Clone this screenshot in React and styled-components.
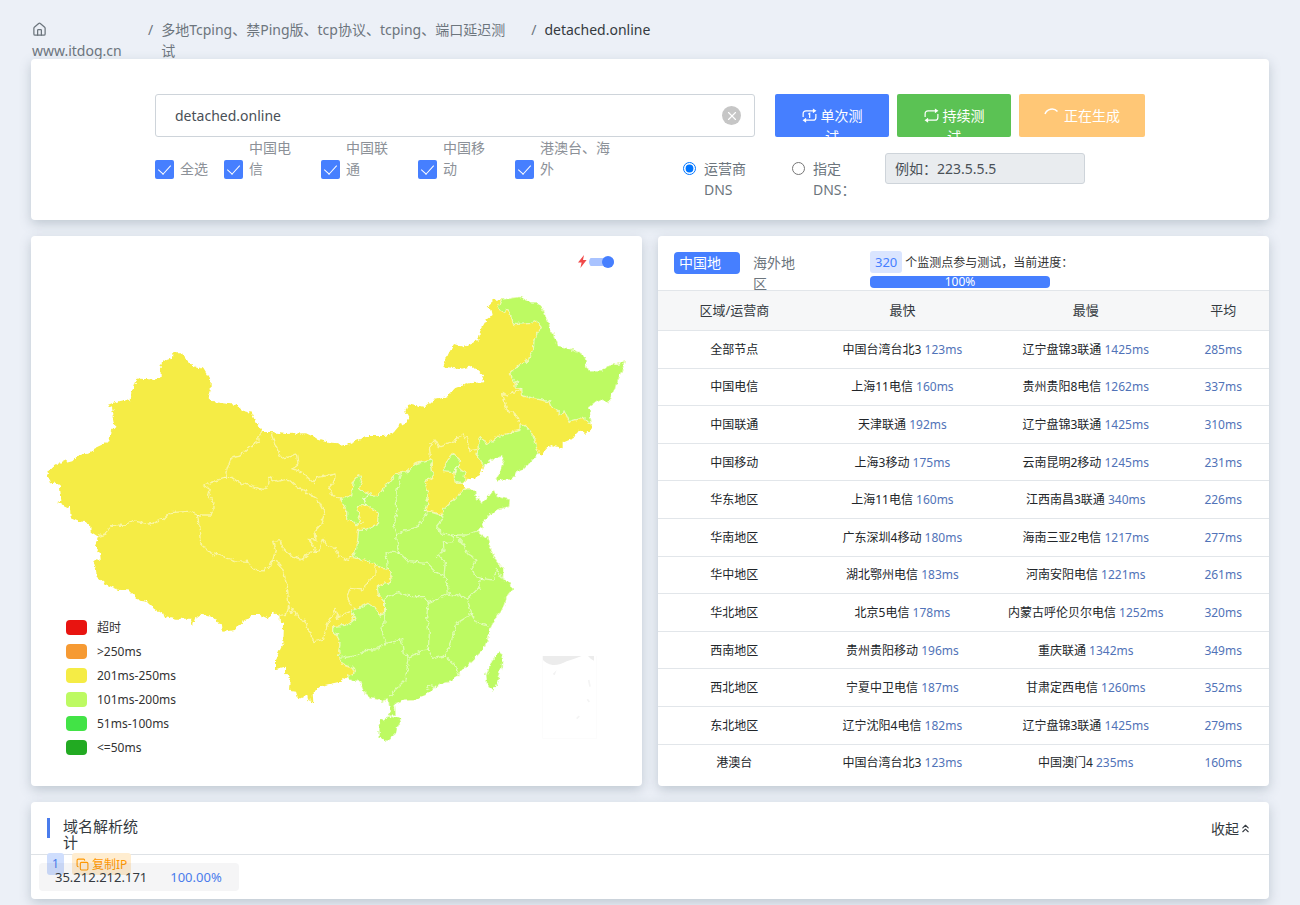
import React from 'react';
import styled, { createGlobalStyle } from 'styled-components';
import { ChevronsUp, Copy, House, X } from 'lucide-react';

const GlobalStyle = createGlobalStyle`
  * {
    box-sizing: border-box;
  }

  body {
    margin: 0;
    background: #ecf0f7;
    color: #212529;
    font-family: "Noto Sans", "Noto Sans CJK SC", sans-serif;
    font-size: 14px;
    line-height: 21px;
  }

  button, input {
    font: inherit;
    margin: 0;
  }
`;

const Page = styled.div`
  padding: 0 31px 6px;
`;

const Card = styled.section`
  background: #fff;
  border-radius: 4px;
  box-shadow: 0 4px 12px rgba(90, 110, 125, 0.3);
`;

/* ---------- breadcrumb ---------- */

const Breadcrumb = styled.ol`
  display: flex;
  list-style: none;
  margin: 0;
  padding: 19px 0 0 1px;
  height: 59px;
  overflow: hidden;
`;

const Crumb = styled.li`
  flex: 0 0 ${(p) => p.$width || 'auto'};
  color: ${(p) => (p.$active ? '#343a40' : '#6c757d')};

  a {
    display: block;
    max-width: 352px;
    color: inherit;
    text-decoration: none;
  }

  svg {
    display: block;
    margin: 3px 0;
  }
`;

const Slash = styled.li`
  padding: 0 8px;
  color: #6c757d;
`;

/* ---------- query form ---------- */

const FormCard = styled(Card)`
  padding: 35px 20px 20px;
`;

const Form = styled.form`
  max-width: 990px;
  margin: 0 auto;
`;

const TopRow = styled.div`
  display: flex;
  gap: 8px;
`;

const HostField = styled.div`
  flex: 0 1 600px;
  display: flex;
  align-items: center;
  height: 43px;
  margin-right: 12px;
  padding-right: 13px;
  border: 1px solid #ced4da;
  border-radius: 3px;

  input {
    flex: 1;
    min-width: 0;
    padding: 0 19px;
    border: 0;
    outline: 0;
    background: none;
    color: #495057;
  }
`;

const ClearButton = styled.button`
  display: flex;
  align-items: center;
  justify-content: center;
  width: 19px;
  height: 19px;
  padding: 0;
  border: 0;
  border-radius: 50%;
  background: #c6c6c6;
  color: #fff;
`;

const ActionButton = styled.button`
  flex: 0 0 ${(p) => p.$width || '114px'};
  height: 43px;
  padding: 11px 24px;
  border: 0;
  border-radius: 2px;
  background: ${(p) => p.$color};
  color: #fff;
  overflow: hidden;

  span {
    display: block;
    height: 21px;
  }

  svg {
    margin-right: 4px;
    vertical-align: -2px;
  }
`;

const OptionRow = styled.div`
  display: flex;
`;

const CheckGroup = styled.div`
  display: flex;
  align-items: flex-end;
  flex: 0 0 528px;
  height: 42px;
`;

const CheckLabel = styled.label`
  display: flex;
  align-items: flex-end;
  gap: 6px;
  flex: 0 0 ${(p) => p.$width};
  color: #8c9198;

  span {
    max-width: ${(p) => p.$textWidth};
  }
`;

const Checkbox = styled.input`
  appearance: none;
  flex: 0 0 19px;
  height: 19px;
  border-radius: 2px;
  background: #467fff;

  &:checked::after {
    content: '';
    display: block;
    width: 6px;
    height: 11px;
    margin: 2px 0 0 6px;
    border: solid #fff;
    border-width: 0 1px 1px 0;
    transform: rotate(42deg);
  }
`;

const DnsGroup = styled.div`
  display: flex;
  align-items: flex-start;
  padding-top: 16px;
`;

const RadioLabel = styled.label`
  display: flex;
  align-items: flex-start;
  gap: 8px;
  width: ${(p) => p.$width};
  padding-top: 5px;
  color: #6c757d;

  input {
    flex: none;
    margin-top: 4px;
  }

  span {
    width: 48px;
  }
`;

const DnsInput = styled.input`
  width: 200px;
  height: 31px;
  padding: 0 9px;
  border: 1px solid #ced4da;
  border-radius: 3px;
  background: #e9ecef;

  &::placeholder {
    color: #495057;
    opacity: 1;
  }
`;

/* ---------- map ---------- */

const Columns = styled.div`
  display: grid;
  grid-template-columns: 1fr 1fr;
  gap: 16px;
  margin: 16px 0;
`;

// the drawing, the legend and the switch share one grid cell
const MapCard = styled(Card)`
  display: grid;

  > * {
    grid-area: 1 / 1;
  }
`;

const MapSvg = styled.svg`
  display: block;
  width: 100%;
`;

const Legend = styled.ul`
  align-self: end;
  justify-self: start;
  list-style: none;
  margin: 0;
  padding: 0 0 26px 35px;
  font-size: 12px;
  color: #333;
  z-index: 1;

  li {
    display: flex;
    align-items: center;
    gap: 10px;
    height: 24px;
    line-height: 18px;
    padding-bottom: 1px;
  }
`;

const Swatch = styled.i`
  width: 21px;
  height: 15px;
  border-radius: 4px;
  background: ${(p) => p.$color};
`;

const SwitchLabel = styled.label`
  align-self: start;
  justify-self: end;
  display: flex;
  align-items: center;
  gap: 2px;
  padding: 19px 28px 0 0;
  z-index: 1;
`;

const Switch = styled.input`
  appearance: none;
  width: 25px;
  height: 12px;
  border-radius: 6px;
  background: linear-gradient(#a9c3ff, #a9c3ff) center / 100% 8px no-repeat;

  &::after {
    content: '';
    display: block;
    width: 12px;
    height: 12px;
    margin-left: auto;
    border-radius: 50%;
    background: #467fff;
  }
`;

/* ---------- region table ---------- */

const TableHead = styled.div`
  display: flex;
  height: 54px;
  padding: 15px 16px 0;
  overflow: hidden;
`;

const Tabs = styled.div`
  display: flex;
  align-items: flex-start;
  gap: 8px;
  flex: 0 0 196px;
`;

const Tab = styled.button`
  width: 66px;
  height: 22px;
  margin-top: 1px;
  padding: 0 18px 1px 5px;
  border: 0;
  border-radius: 4px;
  text-align: left;
  background: ${(p) => (p.$active ? '#467fff' : 'none')};
  color: ${(p) => (p.$active ? '#fff' : '#6c757d')};
  overflow: ${(p) => (p.$active ? 'hidden' : 'visible')};

  span {
    display: block;
    height: 21px;
  }
`;

const ProgressInfo = styled.div`
  font-size: 12px;
  color: #333;
  white-space: nowrap;
`;

const CountLine = styled.div`
  display: flex;
  align-items: center;
  gap: 3px;
`;

const Count = styled.span`
  padding: 0 5px;
  border-radius: 3px;
  background: #dae5ff;
  color: #467fff;
  font-size: 13px;
  line-height: 22px;
`;

const Bar = styled.div`
  width: 180px;
  height: 12px;
  margin-top: 3px;
  border-radius: 4px;
  background: #467fff;
  color: #fff;
  line-height: 12px;
  text-align: center;
`;

const RegionTable = styled.table`
  width: 100%;
  height: 491px;
  table-layout: fixed;
  border-collapse: collapse;
  text-align: center;
  font-size: 12px;

  th {
    height: 40px;
    padding: 0;
    background: #f6f7f8;
    border: solid #e2e6ea;
    border-width: 1px 0;
    font-size: 13px;
    font-weight: 400;
    color: #343a40;
  }

  td {
    padding: 0;
    border-bottom: 1px solid #e2e6ea;
    white-space: nowrap;
  }

  tr:last-child td {
    border-bottom: 0;
  }

  th:nth-child(1) { width: 25%; }
  th:nth-child(2) { width: 30%; }
  th:nth-child(3) { width: 30%; }
  th:nth-child(4) { width: 15%; }
`;

const Ms = styled.span`
  color: #5173b8;
`;

/* ---------- resolve statistics ---------- */

const StatHeader = styled.header`
  display: flex;
  align-items: flex-start;
  justify-content: space-between;
  height: 53px;
  padding: 16px 17px 0 16px;
  border-bottom: 1px solid #dee2e6;
`;

const StatTitle = styled.h2`
  width: 92px;
  height: 20px;
  margin: 0;
  padding-left: 13px;
  border-left: 3px solid #4a7cec;
  font-size: 15px;
  font-weight: 400;
  line-height: 16px;
  color: #343a40;
`;

const FoldButton = styled.button`
  display: flex;
  align-items: center;
  padding: 0;
  border: 0;
  background: none;
  color: #343a40;
`;

const StatBody = styled.div`
  margin-top: -2px;
  padding: 0 8px 8px;
`;

const Tags = styled.div`
  display: flex;
  gap: 8px;
  padding-left: 8px;
  margin-bottom: -12px;
`;

const IndexTag = styled.span`
  width: 17px;
  border-radius: 3px;
  background: #cfdefd;
  color: #4a7cec;
  font-size: 12px;
  line-height: 22px;
  text-align: center;
`;

const CopyButton = styled.button`
  display: flex;
  align-items: center;
  gap: 3px;
  height: 22px;
  padding: 0 4px;
  border: 0;
  border-radius: 3px;
  background: #ffedd0;
  color: #ff9800;
  font-size: 12px;
`;

const IpRow = styled.div`
  position: relative;
  display: flex;
  gap: 23px;
  width: 200px;
  padding: 0 16px;
  border-radius: 4px;
  background: rgba(60, 60, 70, 0.05);
  font-size: 13px;
  line-height: 28px;
  color: #343a40;

  b {
    color: #4a7cec;
    font-weight: 400;
  }
`;

const yellow = '#f5ec45';
const lime = '#bdfa62';

const legend = [
  ['#e81410', '超时'],
  ['#f69a33', '>250ms'],
  [yellow, '201ms-250ms'],
  [lime, '101ms-200ms'],
  ['#42e346', '51ms-100ms'],
  ['#22aa22', '<=50ms'],
];

const rows = [
  ['全部节点', '中国台湾台北3', 123, '辽宁盘锦3联通', 1425, 285],
  ['中国电信', '上海11电信', 160, '贵州贵阳8电信', 1262, 337],
  ['中国联通', '天津联通', 192, '辽宁盘锦3联通', 1425, 310],
  ['中国移动', '上海3移动', 175, '云南昆明2移动', 1245, 231],
  ['华东地区', '上海11电信', 160, '江西南昌3联通', 340, 226],
  ['华南地区', '广东深圳4移动', 180, '海南三亚2电信', 1217, 277],
  ['华中地区', '湖北鄂州电信', 183, '河南安阳电信', 1221, 261],
  ['华北地区', '北京5电信', 178, '内蒙古呼伦贝尔电信', 1252, 320],
  ['西南地区', '贵州贵阳移动', 196, '重庆联通', 1342, 349],
  ['西北地区', '宁夏中卫电信', 187, '甘肃定西电信', 1260, 352],
  ['东北地区', '辽宁沈阳4电信', 182, '辽宁盘锦3联通', 1425, 279],
  ['港澳台', '中国台湾台北3', 123, '中国澳门4', 235, 160],
];

const carriers = ['中国电信', '中国联通', '中国移动'];

const mainland =
  'M52,403 66,382 90,368 108,360 112,368 130,364 148,345 175,341 190,326 238,304 242,272 256,258 252,235 246,203 234,196 258,186 285,180 302,184 304,158 320,110 332,116 372,119 392,112 392,72 410,60 426,55 428,37 455,37 462,52 490,78 520,86 542,122 542,150 536,175 548,186 615,194 640,212 664,218 678,248 696,276 724,276 770,282 828,280 858,294 905,308 925,310 938,320 1010,288 1065,288 1090,278 1110,255 1138,240 1126,215 1135,190 1185,202 1210,180 1250,172 1270,146 1315,130 1364,127 1355,105 1325,78 1290,88 1255,82 1240,78 1255,42 1272,12 1302,22 1345,0 1352,-30 1370,-62 1388,-75 1384,-92 1370,-100 1392,-120 1415,-122 1470,-130 1502,-114 1522,-114 1542,-88 1560,-40 1570,-20 1582,17 1630,28 1665,48 1670,82 1680,90 1720,90 1732,78 1755,72 1785,63 1775,95 1762,120 1755,150 1734,188 1705,180 1678,200 1685,250 1685,265 1665,282 1648,270 1630,295 1598,308 1598,325 1560,315 1534,344 1525,340 1480,390 1458,398 1448,418 1400,425 1397,418 1408,395 1423,360 1415,350 1395,353 1360,380 1350,405 1325,418 1310,416 1300,432 1305,445 1338,452 1342,475 1354,488 1370,470 1382,465 1390,446 1402,470 1440,478 1438,500 1400,510 1355,550 1362,565 1342,572 1372,595 1392,650 1420,685 1420,722 1442,726 1447,748 1430,770 1425,800 1402,825 1382,865 1375,895 1360,930 1330,960 1290,1000 1268,1025 1230,1032 1190,1062 1160,1078 1120,1080 1095,1092 1098,1128 1080,1128 1075,1080 1060,1082 1058,1098 1054,1080 1020,1072 1000,1055 990,1025 960,1020 952,1010 930,1025 870,1038 848,1055 850,1088 835,1080 832,1065 805,1078 798,1055 780,1052 782,1020 765,1000 765,980 735,988 735,960 760,910 762,850 750,845 748,825 730,815 718,838 690,825 668,825 630,850 615,870 578,875 575,850 560,846 555,832 510,824 495,835 488,858 482,836 440,836 405,828 372,806 350,785 330,782 295,748 268,750 225,732 200,710 198,690 190,660 212,662 210,640 195,615 205,590 182,575 180,550 148,543 122,532 120,505 100,495 78,488 94,480 90,440 75,428 60,430Z';

const greenRegions = [
  // 黑龙江
  'M1415,-122 1402,-95 1422,-84 1432,-90 1440,-80 1452,-46 1505,-50 1510,-58 1520,-56 1534,-38 1512,0 1510,30 1495,55 1492,70 1485,60 1438,102 1455,128 1466,122 1455,132 1455,144 1475,146 1478,168 1560,186 1568,205 1585,212 1584,225 1605,215 1618,245 1660,232 1678,250 1685,250 1678,200 1705,180 1734,188 1755,150 1762,120 1775,95 1785,63 1755,72 1732,78 1720,90 1680,90 1670,82 1665,48 1630,28 1582,17 1570,-20 1560,-40 1542,-88 1522,-114 1502,-114 1470,-130Z',
  // 辽宁
  'M1350,294 1364,300 1368,315 1400,290 1470,270 1470,252 1482,254 1502,268 1515,300 1520,325 1528,340 1480,390 1458,398 1448,418 1400,425 1397,418 1408,395 1423,360 1415,350 1395,353 1360,380 1350,355 1338,340 1348,325 1346,300Z',
  // 北京, 天津
  'M1270,340 1292,362 1285,380 1278,385 1270,398 1238,395 1250,365Z',
  'M1280,378 1288,376 1290,388 1308,398 1304,420 1295,432 1275,426 1272,402Z',
  // 宁夏
  'M988,404 995,420 988,448 1015,460 1002,475 1008,492 982,500 988,530 995,542 980,558 965,542 950,538 950,510 930,478 965,465 970,425Z',
  // 陕西 and everything to the south-east
  'M1015,460 1045,468 1060,445 1095,402 1135,394 1155,372 1202,360 1205,380 1210,410 1185,425 1196,460 1186,510 1235,525 1240,510 1302,448 1338,452 1342,475 1354,488 1370,470 1382,465 1390,446 1402,470 1440,478 1438,500 1400,510 1355,550 1362,565 1342,572 1372,595 1392,650 1420,685 1420,722 1442,726 1447,748 1430,770 1425,800 1402,825 1382,865 1375,895 1360,930 1330,960 1290,1000 1268,1025 1230,1032 1190,1062 1160,1078 1120,1080 1095,1092 1098,1128 1080,1128 1075,1080 1060,1082 1058,1098 1054,1080 1020,1072 1000,1055 990,1025 960,1020 952,1010 974,998 968,982 935,970 930,955 926,935 930,910 922,885 908,882 908,860 945,856 975,838 965,810 990,802 1015,790 1035,802 1050,825 1060,822 1062,785 1045,765 1042,738 1075,730 1088,710 1072,690 1035,672 998,658 965,652 980,625 986,568 1010,568 1042,555 1045,520 1008,492 1002,475Z',
  // 海南, 台湾
  'M1052,1140 1075,1128 1115,1136 1102,1160 1100,1180 1072,1204 1045,1192 1044,1160Z',
  'M1408,936 1420,945 1416,980 1405,1025 1388,1056 1370,1035 1368,1005 1385,960Z',
];

const borders = [
  'M696,276 686,292 688,305 662,318 630,348 604,354 592,385 585,412 522,436 540,448 536,468 552,488 544,525 502,525 475,514 420,518 400,538 360,552 308,542 290,556 242,555 228,582 205,590',
  'M722,278 738,320 755,355 800,345 804,372 786,385 815,396 850,428 862,412 915,402 914,420 897,440 905,462 930,478',
  'M585,412 605,412 622,424 665,440 700,448 716,434 718,412 740,424 775,418 800,440 860,475 884,520 870,560 855,575 858,600 835,598 848,618 860,638 835,635 820,660 790,650 760,628 750,602 728,604 736,632 728,662 720,680 690,694 670,690 655,664 615,662 540,638 512,612 505,540 502,525',
  'M728,662 748,670 762,700 772,740 776,795 770,822 750,826 M776,795 782,820 790,805 808,838 825,842 852,905 880,898 890,860 915,808 922,832 960,815',
  'M860,638 870,625 880,598 890,615 915,625 925,650 952,658 965,652',
  'M1035,672 1035,705 1010,730 1000,750 960,745 950,772 965,798',
  'M1475,146 1445,160 1432,168 1418,160 1426,195 1435,218 1450,215 1470,252',
  'M1202,360 1198,320 1215,300 1225,320 1275,302 1300,282 1310,295 1320,332 1342,328',
  'M1115,400 1098,460 1100,520 1092,560 1100,585 1125,570 1160,562 1188,525 1186,510',
  'M1100,585 1102,610 1110,640 1135,665 1190,670 1215,695 1242,705 1252,730 1255,762 1300,770 1312,778',
  'M1235,525 1235,540 1220,558 1235,582 1265,585 1310,585 1342,572',
  'M1265,585 1270,605 1240,608 1242,630 1222,645 1246,668 1242,705',
  'M1275,585 1302,615 1315,645 1340,660 1325,680 1335,710 1355,715 1390,720 1400,685 1420,722',
  'M1355,715 1345,745 1312,778 1325,822 1345,850 1380,860',
  'M1110,640 1068,635 1070,660 1072,690',
  'M1062,785 1070,770 1105,758 1145,770 1185,770 1195,788 1255,762',
  'M1195,788 1190,830 1198,880 1195,930 M1062,785 1065,850 1052,865 1068,910',
  'M1068,910 1115,900 1120,940 1138,952 1180,932 1195,930 1210,955 1245,948 1275,975 1285,1005',
  'M1138,952 1125,1020 1095,1050 1078,1070 M930,955 990,945 1005,928 1035,930 1068,910',
  'M1245,948 1265,900 1280,850 1325,822 M1190,1050 1198,1036 1212,1040 1206,1054',
];

function ChinaMap() {
  return (
    <MapSvg viewBox="3 -312 1833 1650" role="img" aria-label="中国地图">
      <defs>
        {/* breaks straight segments up into rough coast and border lines */}
        <filter id="rough" x="-2%" y="-2%" width="104%" height="104%" colorInterpolationFilters="sRGB">
          <feTurbulence type="fractalNoise" baseFrequency="0.07" numOctaves="3" seed="4" />
          <feDisplacementMap in="SourceGraphic" scale="16" xChannelSelector="R" yChannelSelector="G" />
        </filter>
      </defs>
      <g filter="url(#rough)" strokeLinejoin="round">
        <path d={mainland} fill={yellow} />
        <g fill={lime} stroke="#fff" strokeOpacity="0.55" strokeWidth="4">
          {greenRegions.map((d) => <path key={d} d={d} />)}
        </g>
        <g fill="none" stroke="#fff" strokeOpacity="0.5" strokeWidth="4">
          {borders.map((d) => <path key={d} d={d} />)}
        </g>
      </g>
      <g fill="#ececec">
        <path d="M1537,948H1655Q1630,958 1610,964 1590,976 1568,975 1548,972 1537,958Z" />
        <path d="M1674,948H1692V962Q1684,960 1674,948Z" />
        <path d="M1568,1002 1580,990 1574,1006Z" fill="#f2f2f2" />
        <path d="M1676,1020 1680,1040M1672,1078 1678,1086M1640,1136 1648,1128" stroke="#f4f4f4" strokeWidth="5" />
        <path d="M1537,948V1195H1700V948" fill="none" stroke="#fcfcfc" strokeWidth="3" />
      </g>
    </MapSvg>
  );
}

function LoopIcon({ once }) {
  return (
    <svg width="15" height="15" viewBox="0 0 16 16" fill="none" stroke="#fff" strokeWidth="1.3">
      <path d="M1.2 9.5V6a3 3 0 0 1 3-3H12" />
      <path d="M14.8 6.5V10a3 3 0 0 1-3 3H4" />
      <path d="M11.6.4 15.4 3l-3.8 2.6ZM4.4 10.4.6 13l3.8 2.6Z" fill="#fff" stroke="none" />
      {once && <path d="M6.6 6.6 8.2 5.6V10.6" />}
    </svg>
  );
}

export default function App() {
  return (
    <Page lang="zh-CN">
      <GlobalStyle />
      <nav>
        <Breadcrumb>
          <Crumb $width="108px">
            <a href="#home"><House size={15} strokeWidth={2} />www.itdog.cn</a>
          </Crumb>
          <Slash>/</Slash>
          <Crumb $width="362px">
            <a href="#tcping">多地Tcping、禁Ping版、tcp协议、tcping、端口延迟测试</a>
          </Crumb>
          <Slash>/</Slash>
          <Crumb $active>detached.online</Crumb>
        </Breadcrumb>
      </nav>

      <FormCard>
        <Form onSubmit={(e) => e.preventDefault()}>
          <TopRow>
            <HostField>
              <input type="text" aria-label="域名" defaultValue="detached.online" />
              <ClearButton type="button" aria-label="清空"><X size={14} strokeWidth={2} /></ClearButton>
            </HostField>
            <ActionButton type="submit" $color="#467fff">
              <span><LoopIcon once />单次测试</span>
            </ActionButton>
            <ActionButton type="button" $color="#5bc254">
              <span><LoopIcon />持续测试</span>
            </ActionButton>
            <ActionButton type="button" $color="#ffc776" $width="126px">
              <span>
                <svg width="16" height="16" viewBox="0 0 16 16" fill="none" stroke="#fff" strokeWidth="1.5">
                  <path d="M1 7A7.5 7.5 0 0 1 13.5 4.5" />
                </svg>
                正在生成
              </span>
            </ActionButton>
          </TopRow>

          <OptionRow>
            <CheckGroup>
              <CheckLabel $width="69px" $textWidth="42px">
                <Checkbox type="checkbox" defaultChecked /><span>全选</span>
              </CheckLabel>
              {carriers.map((name) => (
                <CheckLabel key={name} $width="97px" $textWidth="48px">
                  <Checkbox type="checkbox" defaultChecked /><span>{name}</span>
                </CheckLabel>
              ))}
              <CheckLabel $width="120px" $textWidth="76px">
                <Checkbox type="checkbox" defaultChecked /><span>港澳台、海外</span>
              </CheckLabel>
            </CheckGroup>
            <DnsGroup>
              <RadioLabel $width="109px">
                <input type="radio" name="dns" defaultChecked /><span>运营商DNS</span>
              </RadioLabel>
              <RadioLabel $width="93px">
                <input type="radio" name="dns" /><span>指定DNS：</span>
              </RadioLabel>
              <DnsInput type="text" aria-label="指定DNS" placeholder="例如：223.5.5.5" disabled />
            </DnsGroup>
          </OptionRow>
        </Form>
      </FormCard>

      <Columns>
        <MapCard>
          <ChinaMap />
          <Legend>
            {legend.map(([color, text]) => (
              <li key={text}><Swatch $color={color} />{text}</li>
            ))}
          </Legend>
          <SwitchLabel>
            <svg width="9" height="13" viewBox="0 0 9 13" fill="#f04a4a">
              <path d="M6 0 0 7.5h3.6L2.4 13 8.6 5H5Z" />
            </svg>
            <Switch type="checkbox" aria-label="快速模式" defaultChecked />
          </SwitchLabel>
        </MapCard>

        <Card>
          <TableHead>
            <Tabs>
              <Tab type="button" $active><span>中国地区</span></Tab>
              <Tab type="button"><span>海外地区</span></Tab>
            </Tabs>
            <ProgressInfo>
              <CountLine><Count>320</Count>个监测点参与测试，当前进度：</CountLine>
              <Bar>100%</Bar>
            </ProgressInfo>
          </TableHead>
          <RegionTable>
            <thead>
              <tr>
                <th>区域/运营商</th>
                <th>最快</th>
                <th>最慢</th>
                <th>平均</th>
              </tr>
            </thead>
            <tbody>
              {rows.map(([area, fast, fastMs, slow, slowMs, avg]) => (
                <tr key={area}>
                  <td>{area}</td>
                  <td>{fast} <Ms>{fastMs}ms</Ms></td>
                  <td>{slow} <Ms>{slowMs}ms</Ms></td>
                  <td><Ms>{avg}ms</Ms></td>
                </tr>
              ))}
            </tbody>
          </RegionTable>
        </Card>
      </Columns>

      <Card>
        <StatHeader>
          <StatTitle>域名解析统计</StatTitle>
          <FoldButton type="button">收起<ChevronsUp size={13} /></FoldButton>
        </StatHeader>
        <StatBody>
          <Tags>
            <IndexTag>1</IndexTag>
            <CopyButton type="button"><Copy size={13} />复制IP</CopyButton>
          </Tags>
          <IpRow>
            <span>35.212.212.171</span>
            <b>100.00%</b>
          </IpRow>
        </StatBody>
      </Card>
    </Page>
  );
}
